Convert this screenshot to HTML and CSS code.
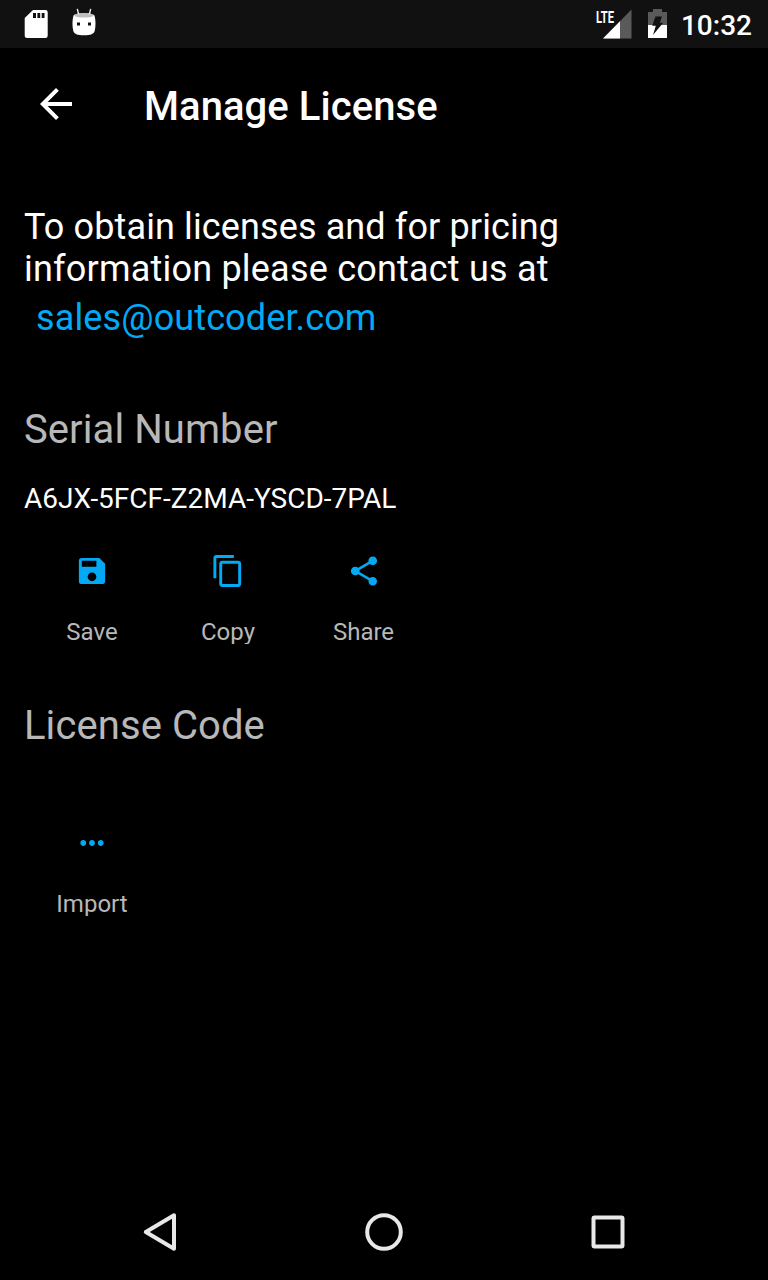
FILE: index.html
```html
<!DOCTYPE html>
<html lang="en">
<head>
<meta charset="utf-8">
<title>Manage License</title>
<link rel="stylesheet" href="styles.css">
</head>
<body>
<div class="screen">
  <div class="status-bar">
    <svg class="status-left" width="120" height="48" viewBox="0 0 120 48">
      <path fill="#fff" d="M33 10h12.500a2.200 2.200 0 0 1 2.200 2.200v23.600a2.200 2.200 0 0 1-2.200 2.200h-18.300a2.500 2.500 0 0 1-2.500-2.500V18z"/>
      <path fill="#111" d="M33 13h3v5h-3zM37.400 13h2.800v5h-2.800zM41.700 13h2.800v5h-2.800z"/>
      <path fill="#fff" d="M73.500 15.500C76 12.500 92 12.500 94.500 15.500C95.800 20 95.800 26 94.800 30.500C94.200 34 90.500 35.300 84 35.300S73.800 34 73.200 30.500C72.200 26 72.200 20 73.500 15.500z"/>
      <ellipse cx="84" cy="15.300" rx="9.600" ry="2.300" fill="#bdbdbd"/>
      <path d="M78.700 14.500L77.300 8.800M89.300 14.500L90.700 8.800" stroke="#eee" stroke-width="1.400"/>
      <path fill="#111" d="M77 22.500h3v3h-3zM88 22.500h3v3h-3z"/>
    </svg>
    <div class="status-right">
      <svg width="88" height="48" viewBox="590 0 88 48">
        <path fill="#5a5a5a" d="M631.500 9.500V38.500H603z"/>
        <path fill="#fff" d="M620 21.300V38.500H603z"/>
        <text class="lte" x="596" y="22.500" textLength="18" lengthAdjust="spacingAndGlyphs">LTE</text>
        <path fill="#5a5a5a" d="M648 12h5V9h9v3h5v13h-19z"/>
        <path fill="#fff" d="M648 25h19v13h-19z"/>
        <path fill="#111" d="M655.500 16.500h6.500l-2.200 6.200h3.400L653 35l2.800-9.300h-3.600z"/>
      </svg>
      <span class="clock">10:32</span>
    </div>
  </div>

  <header class="app-bar">
    <svg class="back" width="48" height="48" viewBox="0 0 24 24"><path d="M20 11H7.830l5.590-5.590L12 4l-8 8 8 8 1.410-1.410L7.830 13H20v-2z"/></svg>
    <h1 class="title">Manage License</h1>
  </header>

  <main class="content">
    <p class="intro"><span class="intro-first">To obtain licenses and for pricing</span><br>information please contact us at</p>
    <a class="email">sales@outcoder.com</a>

    <h2 class="heading">Serial Number</h2>
    <p class="serial">A6JX-5FCF-Z2MA-YSCD-7PAL</p>
    <div class="actions">
      <div class="action">
        <svg class="icon" viewBox="-0.35 -0.35 24.7 24.7"><path d="M17 3H5a2 2 0 0 0-2 2v14a2 2 0 0 0 2 2h14c1.100 0 2-.9 2-2V7l-4-4zm-5 16c-1.660 0-3-1.340-3-3s1.340-3 3-3 3 1.340 3 3-1.340 3-3 3zm3-10H5V5h10v4z"/></svg>
        <span class="label">Save</span>
      </div>
      <div class="action">
        <svg class="icon" viewBox="-0.35 -0.35 24.7 24.7"><path d="M16 1H4c-1.100 0-2 .9-2 2v14h2V3h12V1zm3 4H8c-1.100 0-2 .9-2 2v14c0 1.100.9 2 2 2h11c1.100 0 2-.9 2-2V7c0-1.100-.9-2-2-2zm0 16H8V7h11v14z"/></svg>
        <span class="label">Copy</span>
      </div>
      <div class="action">
        <svg class="icon" viewBox="-0.35 -0.35 24.7 24.7"><path d="M18 16.080c-.76 0-1.440.3-1.960.77L8.910 12.700c.05-.23.09-.46.09-.7s-.04-.47-.09-.7l7.050-4.110c.54.5 1.250.81 2.040.81 1.660 0 3-1.340 3-3s-1.340-3-3-3-3 1.340-3 3c0 .24.04.47.09.7L8.040 9.810C7.500 9.310 6.790 9 6 9c-1.660 0-3 1.340-3 3s1.340 3 3 3c.79 0 1.500-.31 2.040-.81l7.120 4.160c-.05.21-.08.43-.08.65 0 1.610 1.310 2.920 2.920 2.920s2.920-1.310 2.920-2.920-1.310-2.920-2.920-2.920z"/></svg>
        <span class="label label-share">Share</span>
      </div>
    </div>

    <h2 class="heading heading-code">License Code</h2>
    <div class="actions actions-code">
      <div class="action">
        <svg class="icon" viewBox="-0.35 -0.35 24.7 24.7"><path d="M6 10c-1.100 0-2 .9-2 2s.9 2 2 2 2-.9 2-2-.9-2-2-2zm12 0c-1.100 0-2 .9-2 2s.9 2 2 2 2-.9 2-2-.9-2-2-2zm-6 0c-1.100 0-2 .9-2 2s.9 2 2 2 2-.9 2-2-.9-2-2-2z"/></svg>
        <span class="label">Import</span>
      </div>
    </div>
  </main>

  <nav class="nav-bar">
    <svg width="48" height="48" viewBox="0 0 48 48"><path d="M38 7.300V40.700L9.800 24z"/></svg>
    <svg width="48" height="48" viewBox="0 0 48 48"><circle cx="24" cy="24" r="16.800"/></svg>
    <svg width="48" height="48" viewBox="0 0 48 48"><rect x="9.500" y="9.500" width="29" height="29" rx="1"/></svg>
  </nav>
</div>
</body>
</html>
```
FILE: styles.css
```css
body {
  margin: 0;
  background: #000;
  color: #fff;
  font-family: Roboto, "Liberation Sans", sans-serif;
}
.screen {
  display: flex;
  flex-direction: column;
  width: 768px;
  height: 1280px;
  overflow: hidden;
}
svg { display: block; flex: none; }
.status-bar {
  display: flex;
  justify-content: space-between;
  height: 48px;
  background: #111;
}
.status-right { display: flex; padding-right: 16px; gap: 3px; }
.clock { font-size: 28px; font-weight: 500; line-height: 51px; }
.lte {
  font-family: Roboto, sans-serif;
  font-size: 17px;
  font-weight: 700;
  fill: #fff;
}
.app-bar {
  display: flex;
  align-items: center;
  height: 112px;
  padding-left: 32px;
  gap: 64px;
}
.back { fill: #fff; }
.title {
  margin: 5px 0 0;
  font-size: 40px;
  font-weight: 500;
  line-height: 48px;
  letter-spacing: 0.06px;
}
.content {
  display: flex;
  flex: 1;
  flex-direction: column;
  align-items: flex-start;
  padding: 46px 24px 0;
}
.intro {
  margin: 0;
  font-size: 36px;
  line-height: 42px;
  letter-spacing: 0.21px;
}
.intro-first { letter-spacing: 0.12px; }
.email {
  margin: 7px 0 0 12px;
  color: #03a9f4;
  font-size: 36px;
  line-height: 42px;
  letter-spacing: 0.12px;
}
.heading {
  margin: 67px 0 0;
  color: #b8b8b8;
  font-size: 40px;
  font-weight: 400;
  line-height: 48px;
  letter-spacing: 0.08px;
}
.serial { margin: 29px 0 0; font-size: 28px; line-height: 32px; }
.actions { display: flex; margin-top: 38px; }
.action {
  display: flex;
  flex-direction: column;
  align-items: center;
  gap: 29px;
  width: 136px;
}
.icon { width: 36px; height: 36px; fill: #03a9f4; }
.label {
  height: 26px;
  overflow: hidden;
  color: #b8b8b8;
  font-size: 24px;
  line-height: 28px;
}
.label-share { margin-right: 1px; }
.heading-code { margin-top: 58px; }
.actions-code { margin-top: 75px; }
.nav-bar {
  display: flex;
  justify-content: space-between;
  align-items: center;
  height: 96px;
  padding: 0 136px;
}
.nav-bar svg {
  fill: none;
  stroke: #e8e8e8;
  stroke-width: 4;
  stroke-linejoin: round;
}
```
